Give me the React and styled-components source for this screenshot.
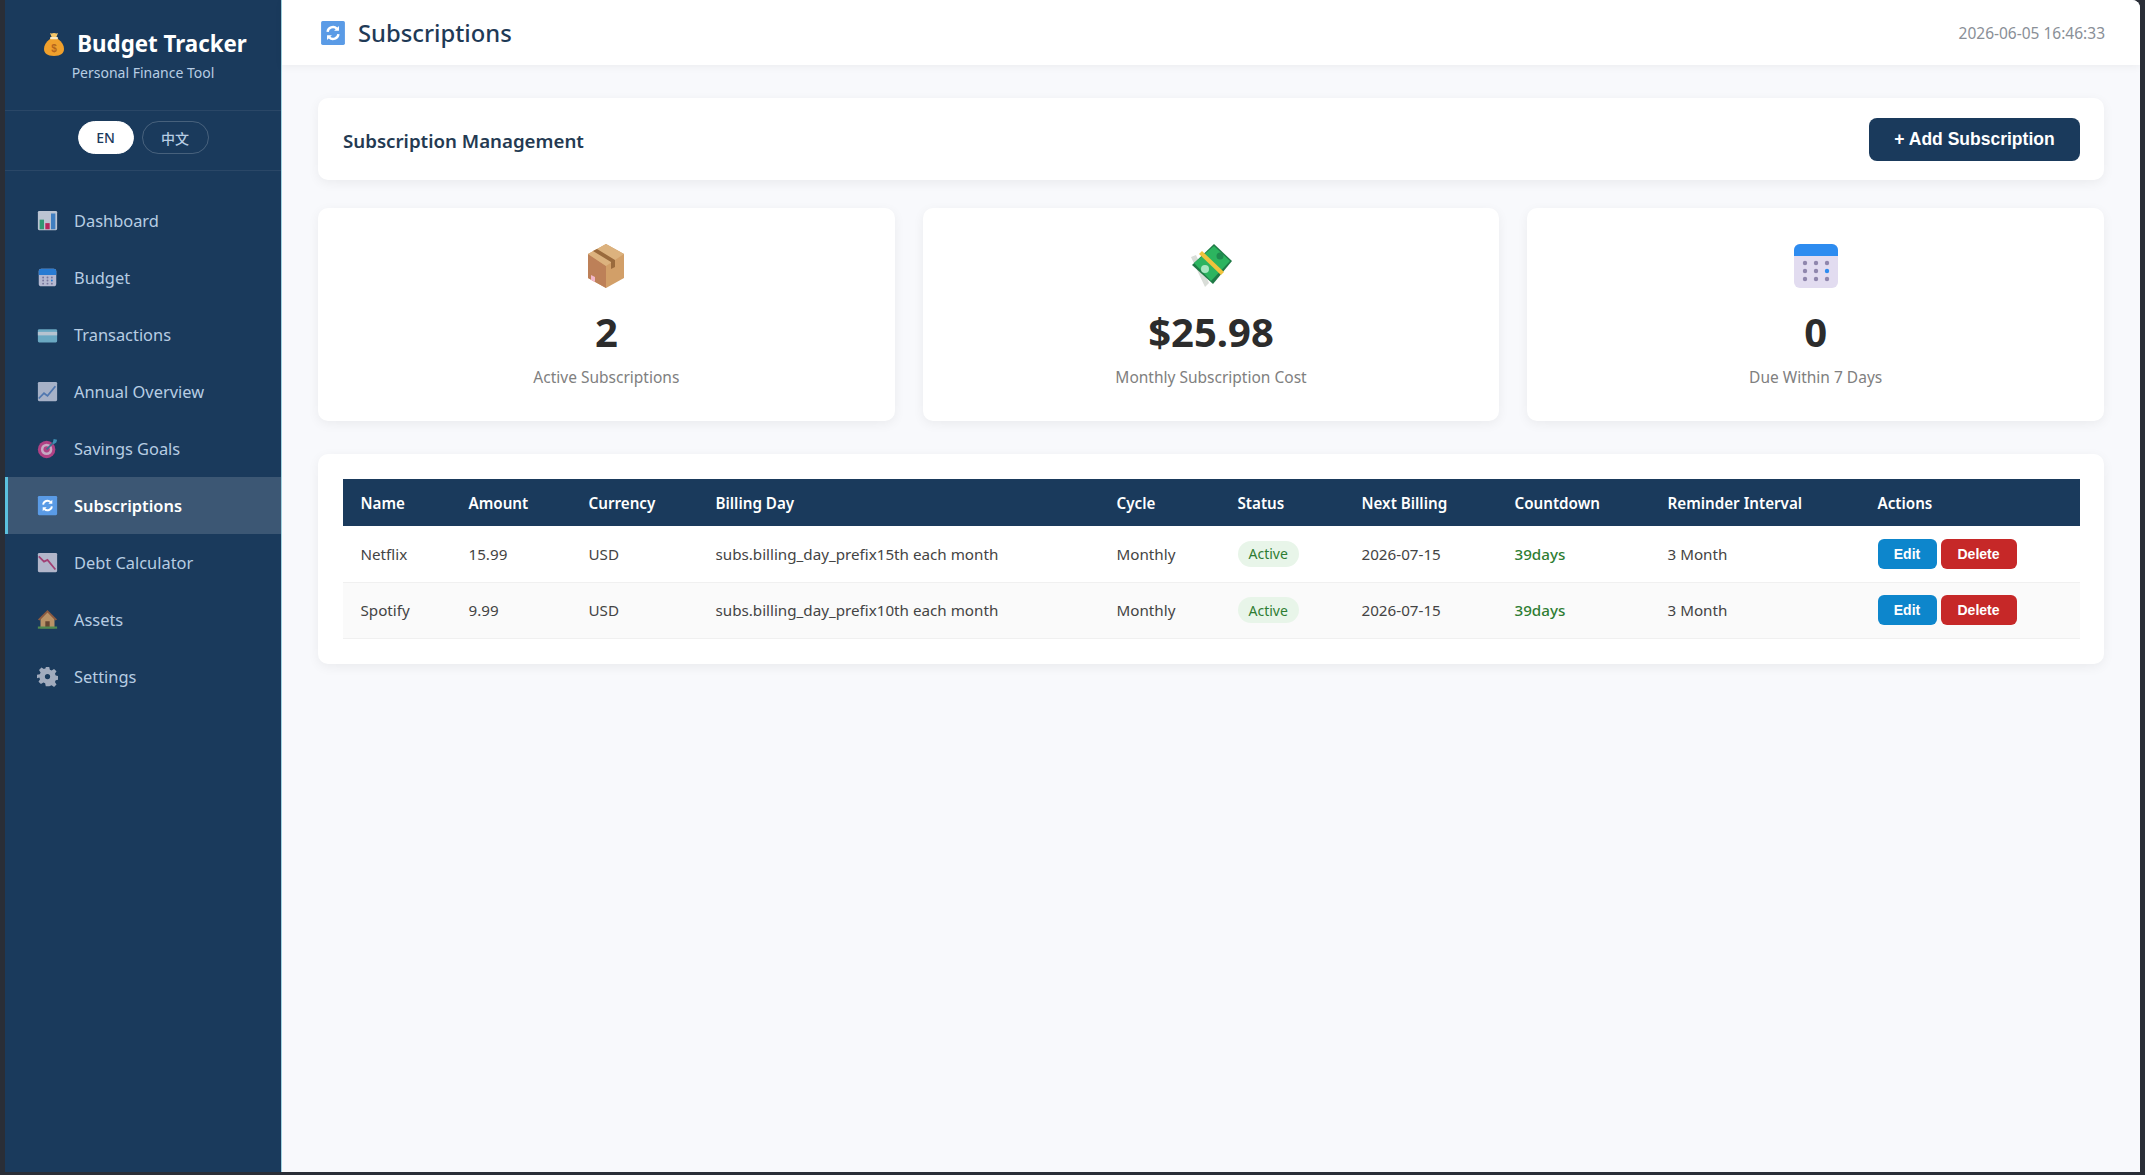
import styled, { createGlobalStyle } from "styled-components";

const GlobalStyle = createGlobalStyle`
  html, body {
    margin: 0;
    height: 100%;
    background: #2a2e37;
  }
  * {
    box-sizing: border-box;
  }
  #root {
    height: 100vh;
    padding: 0 5px 3px;
    font-family: "Noto Sans", "Noto Sans CJK SC", sans-serif;
  }
`;

const Shell = styled.div`
  display: flex;
  height: 100%;
  border-top-right-radius: 8px;
  overflow: hidden;
  background: #f8f9fc;
`;

const Sidebar = styled.aside`
  width: 277px;
  flex-shrink: 0;
  background: #1a3a5c;
  border-right: 1px solid #9fd3e0;
  display: flex;
  flex-direction: column;
`;

const Brand = styled.div`
  height: 111px;
  padding-top: 28px;
  border-bottom: 1px solid rgba(255, 255, 255, 0.07);
  text-align: center;
`;

const BrandTitle = styled.div`
  display: flex;
  align-items: center;
  justify-content: center;
  gap: 13px;
  padding-left: 5px;
  color: #fff;
  font-size: 22.3px;
  font-weight: 700;
  line-height: 32px;
`;

const BrandSub = styled.div`
  margin-top: 3px;
  color: #b7cde3;
  font-size: 14px;
  line-height: 20px;
`;

const LangRow = styled.div`
  height: 60px;
  padding-bottom: 6px;
  display: flex;
  align-items: center;
  justify-content: center;
  gap: 8px;
  border-bottom: 1px solid rgba(255, 255, 255, 0.07);
`;

const LangButton = styled.button`
  width: ${(p) => (p.$active ? "56px" : "67px")};
  height: 33px;
  padding: 0;
  border-radius: 17px;
  border: 1px solid ${(p) => (p.$active ? "#fff" : "rgba(255,255,255,0.2)")};
  background: ${(p) => (p.$active ? "#fff" : "transparent")};
  color: ${(p) => (p.$active ? "#1a3a5c" : "#b7cde3")};
  font-family: inherit;
  font-size: 14px;
  font-weight: 500;
`;

const Nav = styled.nav`
  padding-top: 21px;
  display: flex;
  flex-direction: column;
`;

const NavItem = styled.a`
  height: 57px;
  display: flex;
  align-items: center;
  gap: 16px;
  padding-left: ${(p) => (p.$active ? "29px" : "32px")};
  border-left: ${(p) => (p.$active ? "3px solid #5bc0de" : "none")};
  background: ${(p) => (p.$active ? "rgba(255,255,255,0.15)" : "transparent")};
  color: ${(p) => (p.$active ? "#fff" : "#b7cde3")};
  font-size: 16.4px;
  font-weight: ${(p) => (p.$active ? 600 : 400)};
`;

const NavIcon = styled.span`
  display: flex;
  width: 21px;
  height: 21px;
  opacity: ${(p) => (p.$active ? 1 : 0.8)};
  svg {
    width: 100%;
    height: 100%;
  }
`;

const Main = styled.main`
  flex: 1;
  min-width: 0;
  display: flex;
  flex-direction: column;
`;

const TopBar = styled.header`
  height: 65px;
  flex-shrink: 0;
  background: #fff;
  display: flex;
  align-items: center;
  justify-content: space-between;
  padding: 0 35px 0 38px;
  box-shadow: 0 2px 8px rgba(0, 0, 0, 0.05);
`;

const PageTitle = styled.h1`
  margin: 0;
  display: flex;
  align-items: center;
  gap: 12px;
  color: #1f3a56;
  font-size: 23.8px;
  font-weight: 500;
  svg {
    width: 26px;
    height: 26px;
  }
`;

const Clock = styled.div`
  color: #8a8f97;
  font-size: 15.5px;
`;

const Content = styled.div`
  padding: 33px 36px 0;
  display: flex;
  flex-direction: column;
`;

const Card = styled.section`
  background: #fff;
  border-radius: 10px;
  box-shadow: 0 3px 12px rgba(0, 0, 0, 0.06);
`;

const HeaderCard = styled(Card)`
  height: 82px;
  display: flex;
  align-items: center;
  justify-content: space-between;
  padding: 2px 24px 0 25px;
`;

const SectionTitle = styled.h2`
  margin: 0;
  color: #243a52;
  font-size: 18.7px;
  font-weight: 600;
`;

const AddButton = styled.button`
  width: 211px;
  height: 43px;
  margin-top: -2px;
  border: none;
  border-radius: 8px;
  background: #1a3a5c;
  color: #fff;
  font-family: "Liberation Sans", Arial, sans-serif;
  font-size: 17.5px;
  font-weight: 700;
`;

const StatGrid = styled.div`
  margin-top: 28px;
  display: grid;
  grid-template-columns: repeat(3, 1fr);
  gap: 28px;
`;

const StatCard = styled(Card)`
  height: 213px;
  padding-top: 35px;
  display: flex;
  flex-direction: column;
  align-items: center;
`;

const StatIcon = styled.div`
  width: 46px;
  height: 46px;
  svg {
    width: 100%;
    height: 100%;
    display: block;
  }
`;

const StatValue = styled.div`
  margin-top: 15px;
  color: #2c2c2c;
  font-size: 40px;
  font-weight: 700;
  line-height: 56px;
`;

const StatLabel = styled.div`
  margin-top: 6px;
  color: #808080;
  font-size: 15.5px;
  line-height: 22px;
`;

const TableCard = styled(Card)`
  margin-top: 33px;
  padding: 25px;
`;

const Table = styled.table`
  width: 100%;
  table-layout: fixed;
  border-collapse: collapse;
`;

const Col = styled.col`
  width: ${(p) => p.$w}px;
`;

const Th = styled.th`
  height: 47px;
  padding: 0 0 0 17.5px;
  background: #1a3a5c;
  color: #fff;
  font-size: 15.2px;
  font-weight: 600;
  text-align: left;
  white-space: nowrap;
`;

const Tr = styled.tr`
  height: 56px;
  border-bottom: 1px solid #f0f0f0;
  background: ${(p) => (p.$alt ? "#fafafa" : "#fff")};
`;

const Td = styled.td`
  padding: 0 0 0 17.5px;
  color: ${(p) => (p.$green ? "#2e7d32" : "#444")};
  font-size: 15.2px;
  font-weight: ${(p) => (p.$green ? 500 : 400)};
  white-space: nowrap;
`;

const Badge = styled.span`
  display: inline-flex;
  align-items: center;
  height: 26px;
  padding: 0 11px;
  border-radius: 13px;
  background: #e8f5e9;
  color: #2e7d32;
  font-size: 14px;
`;

const ActionButton = styled.button`
  height: 30px;
  width: ${(p) => (p.$danger ? "76px" : "59px")};
  margin-right: 4px;
  padding: 0;
  border: none;
  border-radius: 6px;
  background: ${(p) => (p.$danger ? "#c62828" : "#0d86cc")};
  color: #fff;
  font-family: "Liberation Sans", Arial, sans-serif;
  font-size: 14px;
  font-weight: 700;
`;

const ChartUpIcon = () => (
  <svg viewBox="0 0 24 24">
    <rect x="1" y="1" width="22" height="22" rx="1.5" fill="#e4e7f0" />
    <rect x="3" y="11" width="5" height="11" fill="#39b07a" />
    <rect x="9.5" y="15" width="5" height="7" fill="#e0245e" />
    <rect x="16" y="4" width="5" height="18" fill="#4a90d9" />
  </svg>
);

const CalendarIcon = () => (
  <svg viewBox="0 0 24 24">
    <rect x="2" y="2" width="20" height="20" rx="3" fill="#dcd8ee" />
    <path d="M2 9V5a3 3 0 0 1 3-3h14a3 3 0 0 1 3 3v4z" fill="#2d8cf0" />
    {[7, 12, 17].map((x) =>
      [12, 15.5, 19].map((y) => (
        <circle
          key={`${x}-${y}`}
          cx={x}
          cy={y}
          r="1.1"
          fill={x === 17 && y === 15.5 ? "#2d8cf0" : "#8f86ad"}
        />
      )),
    )}
  </svg>
);

const CardIcon = () => (
  <svg viewBox="0 0 24 24">
    <rect x="1" y="6" width="22" height="15" rx="1.5" fill="#7fc4dc" />
    <rect x="1" y="9" width="22" height="4" fill="#dde6ee" />
  </svg>
);

const TrendUpIcon = () => (
  <svg viewBox="0 0 24 24">
    <rect x="1" y="1" width="22" height="22" rx="1.5" fill="#c9cfe2" />
    <path d="M2 20l6-6 4 3 9-11" fill="none" stroke="#5d86c4" strokeWidth="2" />
  </svg>
);

const TargetIcon = () => (
  <svg viewBox="0 0 24 24">
    <circle cx="11" cy="13" r="10" fill="#d6438e" />
    <circle cx="11" cy="13" r="6.5" fill="#f2c6dd" />
    <circle cx="11" cy="13" r="3.6" fill="#d6438e" />
    <path d="M11 13L20 4" stroke="#3f7f9a" strokeWidth="2" />
    <path d="M18 6l1-5 4 1-1 3-3 2z" fill="#49a6c9" />
  </svg>
);

const RefreshIcon = () => (
  <svg viewBox="0 0 24 24">
    <rect x="1" y="1" width="22" height="22" rx="1.5" fill="#5a9be6" />
    <path
      d="M7 11a5 5 0 0 1 8.5-3M17 13a5 5 0 0 1-8.5 3"
      fill="none"
      stroke="#fff"
      strokeWidth="2.2"
    />
    <path d="M17.5 5.5V10H13zM6.5 18.5V14H11z" fill="#fff" />
  </svg>
);

const TrendDownIcon = () => (
  <svg viewBox="0 0 24 24">
    <rect x="1" y="1" width="22" height="22" rx="1.5" fill="#d8d5e6" />
    <path d="M2 5l6 6 4-2 9 11" fill="none" stroke="#c4427a" strokeWidth="2" />
  </svg>
);

const HouseIcon = () => (
  <svg viewBox="0 0 24 24">
    <path d="M4 22V11l8-8 8 8v11z" fill="#e0a86a" />
    <path d="M1 12L12 1l11 11-2 1-9-9-9 9z" fill="#a8623a" />
    <rect x="9.5" y="14" width="5" height="8" fill="#7a4a2a" />
    <rect x="1" y="20" width="22" height="2.5" fill="#5fa04e" />
  </svg>
);

const GearIcon = () => (
  <svg viewBox="0 0 24 24">
    <path
      fill="#c3c8d6"
      fillRule="evenodd"
      d="M10 1h4l.7 3.2 2 .9 2.8-1.8 2.8 2.8-1.8 2.8.9 2 3.2.7v4l-3.2.7-.9 2 1.8 2.8-2.8 2.8-2.8-1.8-2 .9L14 23h-4l-.7-3.2-2-.9-2.8 1.8-2.8-2.8 1.8-2.8-.9-2L0 14v-4l3.2-.7.9-2-1.8-2.8 2.8-2.8 2.8 1.8 2-.9zM12 9a3 3 0 1 0 0 6 3 3 0 0 0 0-6z"
    />
  </svg>
);

const MoneyBagIcon = () => (
  <svg width="20" height="24" viewBox="0 0 20 24">
    <path d="M6 7C2 10 0 13 0 17c0 4 3 7 10 7s10-3 10-7c0-4-2-7-6-10z" fill="#f0a02c" />
    <path d="M6 1c1.5 1 2.5 0 4 0s2.5 1 4 0l-2 5H8z" fill="#f6c768" />
    <rect x="6" y="5" width="8" height="2.2" rx="1" fill="#fbe9c0" />
    <text
      x="10"
      y="20"
      fontSize="10"
      fontWeight="700"
      fontFamily="Liberation Sans, sans-serif"
      fill="#b5651d"
      textAnchor="middle"
    >
      $
    </text>
  </svg>
);

const PackageIcon = () => (
  <svg viewBox="0 0 46 46">
    <path d="M23 1l18 10v24L23 45 5 35V11z" fill="#d29f68" />
    <path d="M23 23v22L5 35V11z" fill="#bd8058" />
    <path d="M23 1l18 10-18 12L5 11z" fill="#dcb27e" />
    <path d="M14 6l18 11v7l-4 2v-7L10 8z" fill="#9a6a3c" />
    <path d="M8 32l4 2v5l-4-2z" fill="#f2b6c8" />
  </svg>
);

const MoneyIcon = () => (
  <svg viewBox="0 0 46 46">
    <path d="M3 14l14 30 4-4L8 12z" fill="#d9ddd8" />
    <path d="M26 1l18 17-19 23L4 22z" fill="#1f7a46" />
    <path d="M26 3l16 15-19 20L6 20z" fill="#2cb45f" />
    <path d="M11 11l3-3 22 21-3 3z" fill="#f0c33c" />
    <circle cx="17" cy="26" r="4" fill="#a6e6bf" />
    <circle cx="32" cy="13" r="3.5" fill="#1f8a4e" />
  </svg>
);

const BigCalendarIcon = () => (
  <svg viewBox="0 0 46 46">
    <rect x="1" y="1" width="44" height="44" rx="6" fill="#e2dcf0" />
    <path d="M1 13V7a6 6 0 0 1 6-6h32a6 6 0 0 1 6 6v6z" fill="#2d8cf0" />
    {[12, 23, 34].map((x) =>
      [20, 28, 36].map((y) => (
        <circle
          key={`${x}-${y}`}
          cx={x}
          cy={y}
          r="2.2"
          fill={x === 34 && y === 28 ? "#2d8cf0" : "#8f86ad"}
        />
      )),
    )}
  </svg>
);

const navItems = [
  { label: "Dashboard", icon: <ChartUpIcon /> },
  { label: "Budget", icon: <CalendarIcon /> },
  { label: "Transactions", icon: <CardIcon /> },
  { label: "Annual Overview", icon: <TrendUpIcon /> },
  { label: "Savings Goals", icon: <TargetIcon /> },
  { label: "Subscriptions", icon: <RefreshIcon />, active: true },
  { label: "Debt Calculator", icon: <TrendDownIcon /> },
  { label: "Assets", icon: <HouseIcon /> },
  { label: "Settings", icon: <GearIcon /> },
];

const stats = [
  { value: "2", label: "Active Subscriptions", icon: <PackageIcon /> },
  { value: "$25.98", label: "Monthly Subscription Cost", icon: <MoneyIcon /> },
  { value: "0", label: "Due Within 7 Days", icon: <BigCalendarIcon /> },
];

const columns = [
  ["Name", 108],
  ["Amount", 120],
  ["Currency", 127],
  ["Billing Day", 401],
  ["Cycle", 121],
  ["Status", 124],
  ["Next Billing", 153],
  ["Countdown", 153],
  ["Reminder Interval", 210],
  ["Actions", 220],
];

const subs = [
  { name: "Netflix", amount: "15.99", day: "subs.billing_day_prefix15th each month" },
  { name: "Spotify", amount: "9.99", day: "subs.billing_day_prefix10th each month" },
];

export default function App() {
  return (
    <Shell>
      <GlobalStyle />
      <Sidebar>
        <Brand>
          <BrandTitle>
            <MoneyBagIcon />
            Budget Tracker
          </BrandTitle>
          <BrandSub>Personal Finance Tool</BrandSub>
        </Brand>
        <LangRow>
          <LangButton $active>EN</LangButton>
          <LangButton>中文</LangButton>
        </LangRow>
        <Nav>
          {navItems.map((item) => (
            <NavItem key={item.label} $active={item.active}>
              <NavIcon $active={item.active}>{item.icon}</NavIcon>
              {item.label}
            </NavItem>
          ))}
        </Nav>
      </Sidebar>
      <Main>
        <TopBar>
          <PageTitle>
            <RefreshIcon />
            Subscriptions
          </PageTitle>
          <Clock>2026-06-05 16:46:33</Clock>
        </TopBar>
        <Content>
          <HeaderCard>
            <SectionTitle>Subscription Management</SectionTitle>
            <AddButton>+ Add Subscription</AddButton>
          </HeaderCard>
          <StatGrid>
            {stats.map((s) => (
              <StatCard key={s.label}>
                <StatIcon>{s.icon}</StatIcon>
                <StatValue>{s.value}</StatValue>
                <StatLabel>{s.label}</StatLabel>
              </StatCard>
            ))}
          </StatGrid>
          <TableCard>
            <Table>
              <colgroup>
                {columns.map(([name, w]) => (
                  <Col key={name} $w={w} />
                ))}
              </colgroup>
              <thead>
                <tr>
                  {columns.map(([name]) => (
                    <Th key={name}>{name}</Th>
                  ))}
                </tr>
              </thead>
              <tbody>
                {subs.map((sub, i) => (
                  <Tr key={sub.name} $alt={i === 1}>
                    <Td>{sub.name}</Td>
                    <Td>{sub.amount}</Td>
                    <Td>USD</Td>
                    <Td>{sub.day}</Td>
                    <Td>Monthly</Td>
                    <Td>
                      <Badge>Active</Badge>
                    </Td>
                    <Td>2026-07-15</Td>
                    <Td $green>39days</Td>
                    <Td>3 Month</Td>
                    <Td>
                      <ActionButton>Edit</ActionButton>
                      <ActionButton $danger>Delete</ActionButton>
                    </Td>
                  </Tr>
                ))}
              </tbody>
            </Table>
          </TableCard>
        </Content>
      </Main>
    </Shell>
  );
}
